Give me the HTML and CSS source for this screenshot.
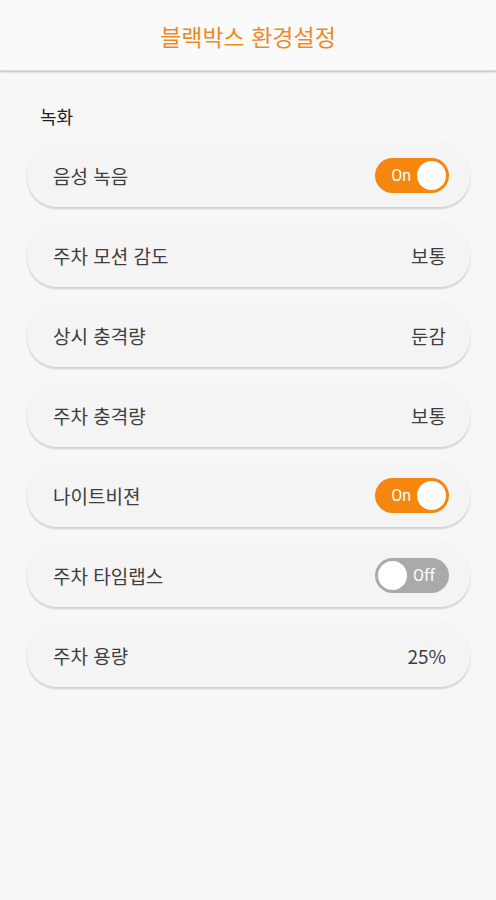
FILE: index.html
```html
<!DOCTYPE html>
<html lang="ko">
  <head>
    <meta charset="UTF-8" />
    <meta name="viewport" content="width=device-width, initial-scale=1.0" />
    <title>블랙박스 환경설정</title>
    <link rel="stylesheet" href="styles.css">
  </head>
  <body>
    <header class="top-bar">
      <h1>블랙박스 환경설정</h1>
    </header>

    <main class="settings">
      <h2 class="section-title">녹화</h2>

      <div class="row">
        <span class="label">음성 녹음</span>
        <span class="toggle on"><span class="toggle-text">On</span><span class="knob"></span></span>
      </div>

      <div class="row">
        <span class="label">주차 모션 감도</span>
        <span class="value">보통</span>
      </div>

      <div class="row">
        <span class="label">상시 충격량</span>
        <span class="value">둔감</span>
      </div>

      <div class="row">
        <span class="label">주차 충격량</span>
        <span class="value">보통</span>
      </div>

      <div class="row">
        <span class="label">나이트비젼</span>
        <span class="toggle on"><span class="toggle-text">On</span><span class="knob"></span></span>
      </div>

      <div class="row">
        <span class="label">주차 타임랩스</span>
        <span class="toggle off"><span class="knob"></span><span class="toggle-text">Off</span></span>
      </div>

      <div class="row">
        <span class="label">주차 용량</span>
        <span class="value">25%</span>
      </div>
    </main>
  </body>
</html>
```

FILE: styles.css
```css
:root {
  --accent: #f5870f;
  --page-bg: #f7f7f7;
  --card-bg: #f4f4f4;
  --text: #3e3e3e;
}

* {
  margin: 0;
  padding: 0;
  box-sizing: border-box;
}

body {
  font-family: "Noto Sans CJK KR", "Noto Sans", sans-serif;
  background: var(--page-bg);
  color: var(--text);
}

.top-bar {
  height: 71px;
  background: #fafafa;
  display: flex;
  align-items: center;
  justify-content: center;
  box-shadow: 0 1px 2px rgba(0, 0, 0, 0.25);
  border-bottom: 1px solid #d8d8d8;
}

.top-bar h1 {
  font-size: 23px;
  font-weight: 400;
  color: #f08a1e;
  margin-top: 2px;
}

.settings {
  padding: 32px 26px 0 27px;
}

.section-title {
  font-size: 18px;
  font-weight: 400;
  color: #222;
  margin: 0 0 14px 13px;
}

.row {
  height: 64px;
  margin-bottom: 16px;
  background: var(--card-bg);
  border-radius: 30px;
  box-shadow: 0 2px 2px rgba(0, 0, 0, 0.16);
  display: flex;
  align-items: center;
  justify-content: space-between;
  padding: 0 21px 0 26px;
}

.label {
  font-size: 19px;
}

.value {
  font-size: 19px;
  padding-right: 3px;
}

.toggle {
  width: 74px;
  height: 35px;
  border-radius: 18px;
  display: flex;
  align-items: center;
  padding: 0 3px;
  gap: 6px;
}

.toggle.on {
  background: var(--accent);
  justify-content: flex-end;
}

.toggle.off {
  background: #aaa;
}

.toggle-text {
  font-family: Roboto, "Noto Sans", sans-serif;
  font-size: 16px;
  color: #fff;
}

.knob {
  width: 29px;
  height: 29px;
  border-radius: 50%;
  background: #fff;
}
```
